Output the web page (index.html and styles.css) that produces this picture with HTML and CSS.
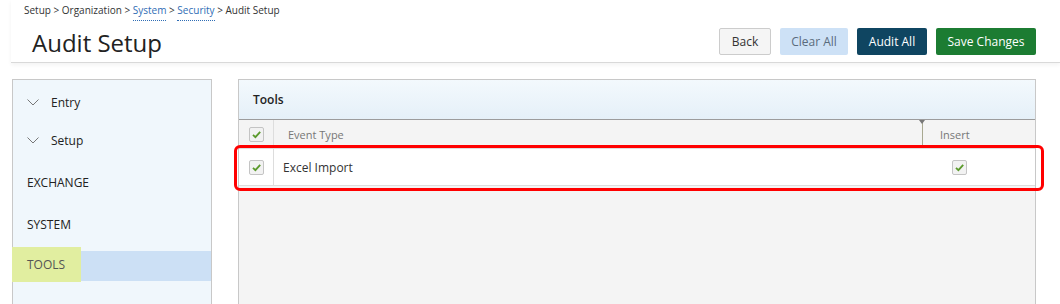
FILE: index.html
```html
<!DOCTYPE html>
<html lang="en">
<head>
    <meta charset="UTF-8">
    <title>Audit Setup</title>
    <link rel="stylesheet" href="styles.css">
</head>
<body>
    <div class="page-head">
        <div class="crumbs">
            Setup &gt; Organization &gt; <a href="#">System</a> &gt; <a href="#">Security</a> &gt; Audit Setup
        </div>
        <div class="title-row">
            <h1>Audit Setup</h1>
            <div class="actions">
                <button class="btn btn-back">Back</button>
                <button class="btn btn-clear">Clear All</button>
                <button class="btn btn-audit">Audit All</button>
                <button class="btn btn-save">Save Changes</button>
            </div>
        </div>
    </div>

    <div class="content">
        <!-- Sidebar -->
        <div class="sidebar">
            <div class="nav-item group">
                <svg class="chev" width="12" height="7" viewBox="0 0 12 7"><path d="M0.5 0.5 L6 6 L11.5 0.5" fill="none" stroke="#777" stroke-width="1"/></svg>
                Entry
            </div>
            <div class="nav-item group">
                <svg class="chev" width="12" height="7" viewBox="0 0 12 7"><path d="M0.5 0.5 L6 6 L11.5 0.5" fill="none" stroke="#777" stroke-width="1"/></svg>
                Setup
            </div>
            <div class="nav-item leaf">EXCHANGE</div>
            <div class="nav-item leaf">SYSTEM</div>
            <div class="nav-item leaf active"><span class="mark">TOOLS</span></div>
        </div>

        <!-- Main -->
        <div class="panel">
            <div class="panel-title">Tools</div>
            <div class="grid-head">
                <div class="col-check"><span class="cb"></span></div>
                <div class="col-event">Event Type</div>
                <div class="col-insert">Insert</div>
            </div>
            <div class="grid-row">
                <div class="col-check"><span class="cb"></span></div>
                <div class="col-event">Excel Import</div>
                <div class="col-insert"><span class="cb"></span></div>
                <div class="callout"></div>
            </div>
        </div>
    </div>
</body>
</html>
```

FILE: styles.css
```css
* {
    margin: 0;
    padding: 0;
    box-sizing: border-box;
}

body {
    font-family: 'Open Sans', sans-serif;
    color: #333;
    background: #fff;
    overflow: hidden;
}

/* Header */
.page-head {
    margin-left: 11px;
    height: 63px;
    border-bottom: 1px solid #d9d9d9;
    box-shadow: 0 2px 4px rgba(0, 0, 0, 0.05);
}

.crumbs {
    padding: 3px 0 0 13px;
    font-size: 10px;
    line-height: 14px;
    color: #333;
}

.crumbs a {
    color: #2f6db5;
    text-decoration: none;
    border-bottom: 1px dotted #2f6db5;
    padding-bottom: 3px;
}

.title-row {
    display: flex;
    justify-content: space-between;
    align-items: center;
    padding: 0 24px 0 21px;
    margin-top: 8px;
}

h1 {
    font-size: 24px;
    font-weight: 400;
    color: #222;
    line-height: 28px;
    margin-top: 4px;
}

.actions {
    display: flex;
    gap: 9px;
}

.btn {
    font-family: 'Open Sans', sans-serif;
    font-size: 12px;
    height: 27px;
    padding: 0;
    white-space: nowrap;
    border: 1px solid transparent;
    border-radius: 2px;
    cursor: pointer;
}

.btn-back {
    background: #f5f5f5;
    border-color: #ccc;
    color: #333;
    width: 52px;
}

.btn-clear {
    background: #cde1f6;
    color: #5a6b7c;
    width: 68px;
}

.btn-audit {
    background: #0f4561;
    color: #fff;
    width: 70px;
}

.btn-save {
    background: #1c7c32;
    color: #fff;
    width: 100px;
}

/* Layout */
.content {
    display: flex;
    gap: 26px;
    padding: 16px 0 0 12px;
}

.sidebar {
    width: 200px;
    height: 240px;
    background: #f0f7fc;
    border: 1px solid #c8c8c8;
    border-bottom: none;
    padding-top: 7px;
}

.nav-item {
    display: flex;
    align-items: center;
    height: 30px;
    font-size: 12px;
    color: #222;
    margin-bottom: 12px;
    padding-left: 14px;
}

.nav-item.group {
    gap: 12px;
}

.nav-item.group:first-child {
    margin-bottom: 8px;
}

.nav-item.leaf {
    font-size: 12px;
}

.nav-item.active {
    background: #cce0f5;
    padding-left: 0;
    align-items: stretch;
}

.mark {
    display: flex;
    align-items: center;
    background: #e1eea0;
    padding: 0 16px 0 15px;
    margin: -4px 0 -1px -1px;
    color: #555;
}

/* Panel */
.panel {
    width: 798px;
    height: 240px;
    background: #f4f4f4;
    border: 1px solid #c8c8c8;
    border-bottom: none;
}

.panel-title {
    height: 40px;
    line-height: 39px;
    padding-left: 14px;
    font-size: 12px;
    font-weight: 600;
    color: #222;
    background: linear-gradient(#f3f9fd, #e5f0f8);
    border-bottom: 1px solid #9c9c9c;
}

.grid-head,
.grid-row {
    display: flex;
}

.grid-head {
    height: 28px;
    font-size: 11px;
    color: #777;
}

.grid-row {
    position: relative;
    height: 38px;
    background: #fff;
    border-top: 1px solid #ddd;
    border-bottom: 1px solid #ddd;
    font-size: 12px;
    color: #333;
}

.col-check {
    width: 35px;
    border-right: 1px solid #ddd;
    display: flex;
    align-items: center;
    justify-content: center;
}

.col-event {
    width: 648px;
    display: flex;
    align-items: center;
}

.grid-head .col-event {
    padding-left: 14px;
}

.grid-row .col-event {
    padding-left: 9px;
}

.col-insert {
    flex: 1;
    display: flex;
    align-items: center;
}

.grid-head .col-insert {
    position: relative;
    border-left: 1px solid #a8a890;
    padding-left: 17px;
}

.grid-head .col-insert::before {
    content: '';
    position: absolute;
    top: 0;
    left: -4px;
    border-left: 3px solid transparent;
    border-right: 3px solid transparent;
    border-top: 4px solid #777;
}

.grid-row .col-insert {
    padding-left: 30px;
}

.cb {
    width: 15px;
    height: 15px;
    border: 1px solid #c4c4c4;
    border-radius: 2px;
    background: #f2f2f2 url("data:image/svg+xml,%3Csvg xmlns='http://www.w3.org/2000/svg' width='13' height='13'%3E%3Cpath d='M3 6.8 L5.4 9.2 L10.2 3.8' fill='none' stroke='%235b9a2c' stroke-width='1.8'/%3E%3C/svg%3E") no-repeat center;
}

/* red highlight around the row */
.callout {
    position: absolute;
    top: -4px;
    left: -5px;
    right: -9px;
    bottom: -6px;
    border: 3px solid #f00;
    border-radius: 6px;
    pointer-events: none;
}
```
